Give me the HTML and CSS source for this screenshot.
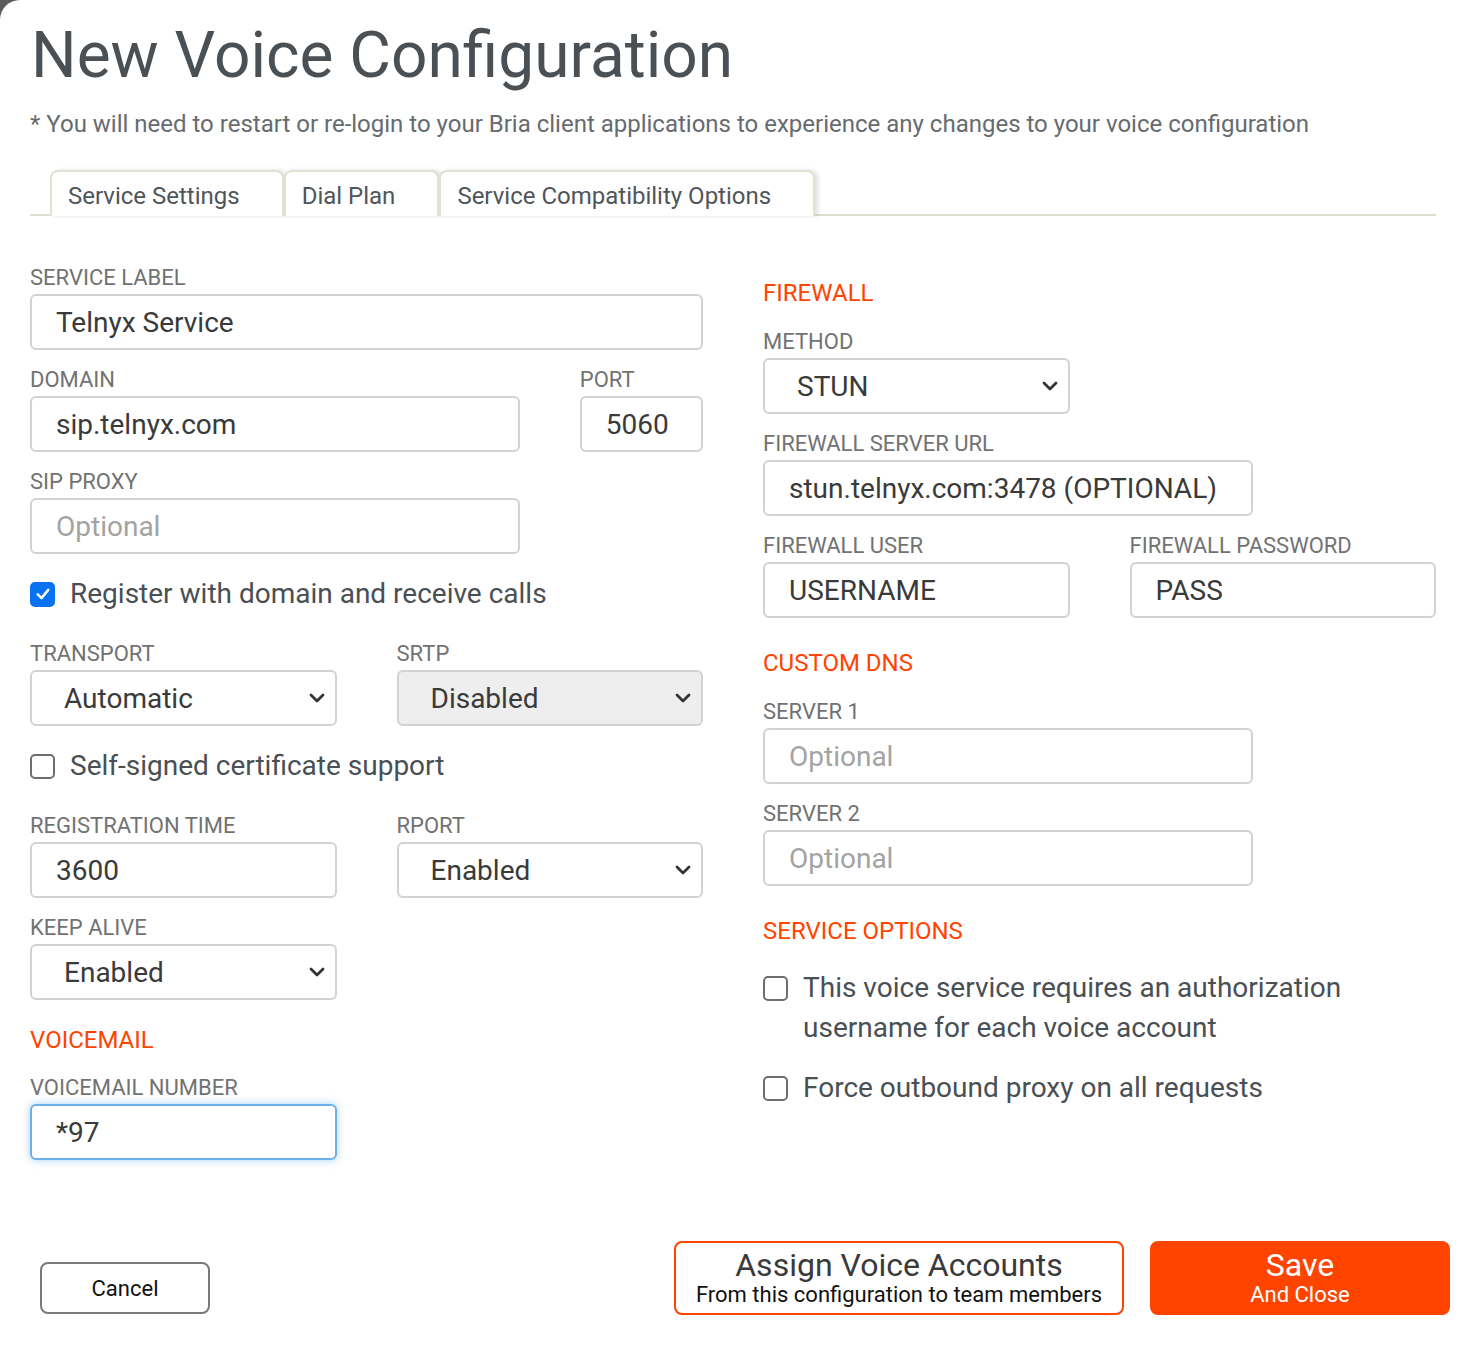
FILE: index.html
```html
<!DOCTYPE html>
<html lang="en">

<head>
    <meta charset="UTF-8">
    <meta name="viewport" content="width=device-width, initial-scale=1.0">
    <title>New Voice Configuration</title>
    <link rel="stylesheet" href="styles.css">
</head>

<body>

    <div class="modal">
        <h1 class="title">New Voice Configuration</h1>
        <p class="notice">* You will need to restart or re-login to your Bria client applications to experience any changes to your voice configuration</p>

        <!-- Tabs -->
        <ul class="tabs">
            <li class="tab active">Service Settings</li>
            <li class="tab">Dial Plan</li>
            <li class="tab">Service Compatibility Options</li>
        </ul>

        <div class="row form-body">
            <!-- Left column -->
            <div class="col col-6">
                <div class="field">
                    <label>Service Label</label>
                    <input type="text" value="Telnyx Service">
                </div>

                <div class="row">
                    <div class="col col-9 field">
                        <label>Domain</label>
                        <input type="text" value="sip.telnyx.com">
                    </div>
                    <div class="col col-3 field">
                        <label>Port</label>
                        <input type="text" value="5060">
                    </div>
                </div>

                <div class="row">
                    <div class="col col-9 field">
                        <label>SIP Proxy</label>
                        <input type="text" placeholder="Optional">
                    </div>
                </div>

                <div class="check-row">
                    <span class="checkbox checked">
                        <svg viewBox="0 0 24 24" width="18" height="18"><path d="M5 12.5 L10 17.5 L19 6.5" fill="none" stroke="#fff" stroke-width="3.2" stroke-linecap="round" stroke-linejoin="round"/></svg>
                    </span>
                    <span>Register with domain and receive calls</span>
                </div>

                <div class="row">
                    <div class="col col-6 field">
                        <label>Transport</label>
                        <div class="select-wrap">
                            <select>
                                <option>Automatic</option>
                            </select>
                            <svg class="chevron" viewBox="0 0 16 10" width="16" height="10"><path d="M2 2 L8 8 L14 2" fill="none" stroke="#333" stroke-width="2.8" stroke-linecap="round" stroke-linejoin="round"/></svg>
                        </div>
                    </div>
                    <div class="col col-6 field">
                        <label>SRTP</label>
                        <div class="select-wrap">
                            <select class="disabled">
                                <option>Disabled</option>
                            </select>
                            <svg class="chevron" viewBox="0 0 16 10" width="16" height="10"><path d="M2 2 L8 8 L14 2" fill="none" stroke="#333" stroke-width="2.8" stroke-linecap="round" stroke-linejoin="round"/></svg>
                        </div>
                    </div>
                </div>

                <div class="check-row">
                    <span class="checkbox"></span>
                    <span>Self-signed certificate support</span>
                </div>

                <div class="row">
                    <div class="col col-6 field">
                        <label>Registration Time</label>
                        <input type="text" value="3600">
                    </div>
                    <div class="col col-6 field">
                        <label>RPORT</label>
                        <div class="select-wrap">
                            <select>
                                <option>Enabled</option>
                            </select>
                            <svg class="chevron" viewBox="0 0 16 10" width="16" height="10"><path d="M2 2 L8 8 L14 2" fill="none" stroke="#333" stroke-width="2.8" stroke-linecap="round" stroke-linejoin="round"/></svg>
                        </div>
                    </div>
                </div>

                <div class="row">
                    <div class="col col-6 field">
                        <label>Keep Alive</label>
                        <div class="select-wrap">
                            <select>
                                <option>Enabled</option>
                            </select>
                            <svg class="chevron" viewBox="0 0 16 10" width="16" height="10"><path d="M2 2 L8 8 L14 2" fill="none" stroke="#333" stroke-width="2.8" stroke-linecap="round" stroke-linejoin="round"/></svg>
                        </div>
                    </div>
                </div>

                <h3 class="section-title voicemail">Voicemail</h3>

                <div class="row">
                    <div class="col col-6 field">
                        <label>Voicemail Number</label>
                        <input type="text" class="focused" value="*97">
                    </div>
                </div>
            </div>

            <!-- Right column -->
            <div class="col col-6">
                <h3 class="section-title">Firewall</h3>

                <div class="row">
                    <div class="col col-6 field">
                        <label>Method</label>
                        <div class="select-wrap">
                            <select>
                                <option>STUN</option>
                            </select>
                            <svg class="chevron" viewBox="0 0 16 10" width="16" height="10"><path d="M2 2 L8 8 L14 2" fill="none" stroke="#333" stroke-width="2.8" stroke-linecap="round" stroke-linejoin="round"/></svg>
                        </div>
                    </div>
                </div>

                <div class="row">
                    <div class="col col-9 field">
                        <label>Firewall Server URL</label>
                        <input type="text" value="stun.telnyx.com:3478 (OPTIONAL)">
                    </div>
                </div>

                <div class="row">
                    <div class="col col-6 field">
                        <label>Firewall User</label>
                        <input type="text" value="USERNAME">
                    </div>
                    <div class="col col-6 field">
                        <label>Firewall Password</label>
                        <input type="text" value="PASS">
                    </div>
                </div>

                <h3 class="section-title">Custom DNS</h3>

                <div class="row">
                    <div class="col col-9 field">
                        <label>Server 1</label>
                        <input type="text" placeholder="Optional">
                    </div>
                </div>

                <div class="row">
                    <div class="col col-9 field">
                        <label>Server 2</label>
                        <input type="text" placeholder="Optional">
                    </div>
                </div>

                <h3 class="section-title">Service Options</h3>

                <div class="option-row">
                    <span class="checkbox"></span>
                    <span>This voice service requires an authorization username for each voice account</span>
                </div>
                <div class="option-row">
                    <span class="checkbox"></span>
                    <span>Force outbound proxy on all requests</span>
                </div>
            </div>
        </div>

        <!-- Footer buttons -->
        <div class="footer">
            <button class="btn-cancel">Cancel</button>
            <div class="footer-actions">
                <button class="btn-assign">
                    <span class="btn-main">Assign Voice Accounts</span>
                    <span class="btn-sub">From this configuration to team members</span>
                </button>
                <button class="btn-save">
                    <span class="btn-main">Save</span>
                    <span class="btn-sub">And Close</span>
                </button>
            </div>
        </div>
    </div>

</body>

</html>
```

FILE: styles.css
```css
/* General Reset */
* {
    margin: 0;
    padding: 0;
    box-sizing: border-box;
}

body {
    font-family: Roboto, "Liberation Sans", Arial, sans-serif;
    background-color: #5b5b5b; /* backdrop behind the modal */
    color: #333;
}

/* Modal */
.modal {
    background-color: white;
    border-top-left-radius: 20px;
    min-height: 1352px;
    padding: 20px 29px 0 30px;
}

.title {
    font-size: 64px;
    font-weight: 400;
    color: #4b5055;
    line-height: 72px;
    padding-left: 1px;
}

.notice {
    font-size: 24px;
    color: #666b70;
    margin-top: 18px;
    line-height: 28px;
}

/* Tabs */
.tabs {
    list-style: none;
    display: flex;
    padding-left: 20px;
    margin-top: 32px;
    border-bottom: 2px solid #deddd0;
}

.tab {
    font-size: 24px;
    color: #50555a;
    height: 46px;
    line-height: 48px;
    padding: 0 42px 0 16px;
    border: 2px solid #e2e1d4;
    border-bottom: none;
    border-radius: 8px 8px 0 0;
    box-shadow: 3px 0 4px rgba(0, 0, 0, 0.12);
    margin-bottom: -2px;
    background-color: white;
}

/* Grid */
.row {
    display: flex;
    margin: 0 -30px;
}

.col {
    padding: 0 30px;
}

.col-6 { width: 50%; }
.col-9 { width: 75%; }
.col-3 { width: 25%; }

.form-body {
    margin-top: 50px;
}

/* Fields */
.field {
    margin-bottom: 18px;
}

.field label {
    display: block;
    font-size: 22px;
    line-height: 24px;
    color: #727272;
    text-transform: uppercase;
    margin-bottom: 4px;
}

.field input,
.field select {
    width: 100%;
    height: 56px;
    border: 2px solid #d2d2d2;
    border-radius: 6px;
    font-family: inherit;
    font-size: 28px;
    color: #3a3a3a;
    padding: 0 24px;
    background-color: white;
    outline: none;
}

.field input::placeholder {
    color: #a3a3a3;
}

.field input.focused {
    border-color: #6bb0ea;
    box-shadow: 0 0 9px rgba(102, 175, 233, 0.55);
}

.select-wrap {
    position: relative;
}

.field select {
    appearance: none;
    -webkit-appearance: none;
    padding-left: 32px;
}

.field select.disabled {
    background-color: #eeeeee;
}

.chevron {
    position: absolute;
    right: 12px;
    top: 23px;
}

/* Section headings */
.section-title {
    font-size: 24px;
    font-weight: 400;
    line-height: 28px;
    color: #ff4400;
    text-transform: uppercase;
    margin: 13px 0 23px;
}

.section-title.voicemail {
    margin: 8px 0 22px;
}

/* Checkboxes */
.checkbox {
    flex: none;
    width: 25px;
    height: 25px;
    border: 2px solid #6e6e6e;
    border-radius: 5px;
    display: flex;
    align-items: center;
    justify-content: center;
    background-color: white;
}

.checkbox.checked {
    background-color: #0a72f0;
    border-color: #0a72f0;
}

.check-row {
    display: flex;
    align-items: center;
    gap: 15px;
    font-size: 28px;
    line-height: 40px;
    color: #4a4f54;
    margin: 2px 0 28px;
}

.option-row {
    display: flex;
    align-items: flex-start;
    gap: 15px;
    font-size: 28px;
    line-height: 40px;
    color: #4a4f54;
    margin-bottom: 20px;
}

.option-row .checkbox {
    margin-top: 8px;
}

.option-row:first-of-type {
    margin-top: 25px;
}

/* Footer */
.footer {
    display: flex;
    justify-content: space-between;
    align-items: flex-end;
    padding-left: 10px;
    margin-right: -14px;
    margin-top: 63px;
}

.footer-actions {
    display: flex;
    gap: 26px;
}

.footer button {
    font-family: inherit;
    cursor: pointer;
    border-radius: 8px;
    background-color: white;
}

.btn-cancel {
    width: 170px;
    height: 52px;
    border: 2px solid #7a7a7a;
    font-size: 22px;
    color: #111;
    margin-bottom: 1px;
}

.btn-assign,
.btn-save {
    height: 74px;
    display: flex;
    flex-direction: column;
    align-items: center;
    justify-content: center;
}

.btn-assign {
    width: 450px;
    border: 2px solid #ff4400;
}

.btn-save {
    width: 300px;
    border: 2px solid #ff4400;
    background-color: #ff4400 !important;
    color: white;
}

.btn-main {
    font-size: 32px;
    line-height: 34px;
}

.btn-sub {
    font-size: 22px;
    line-height: 26px;
}

.btn-assign .btn-main {
    color: #3a3a3a;
}

.btn-assign .btn-sub {
    color: #111;
}
```
